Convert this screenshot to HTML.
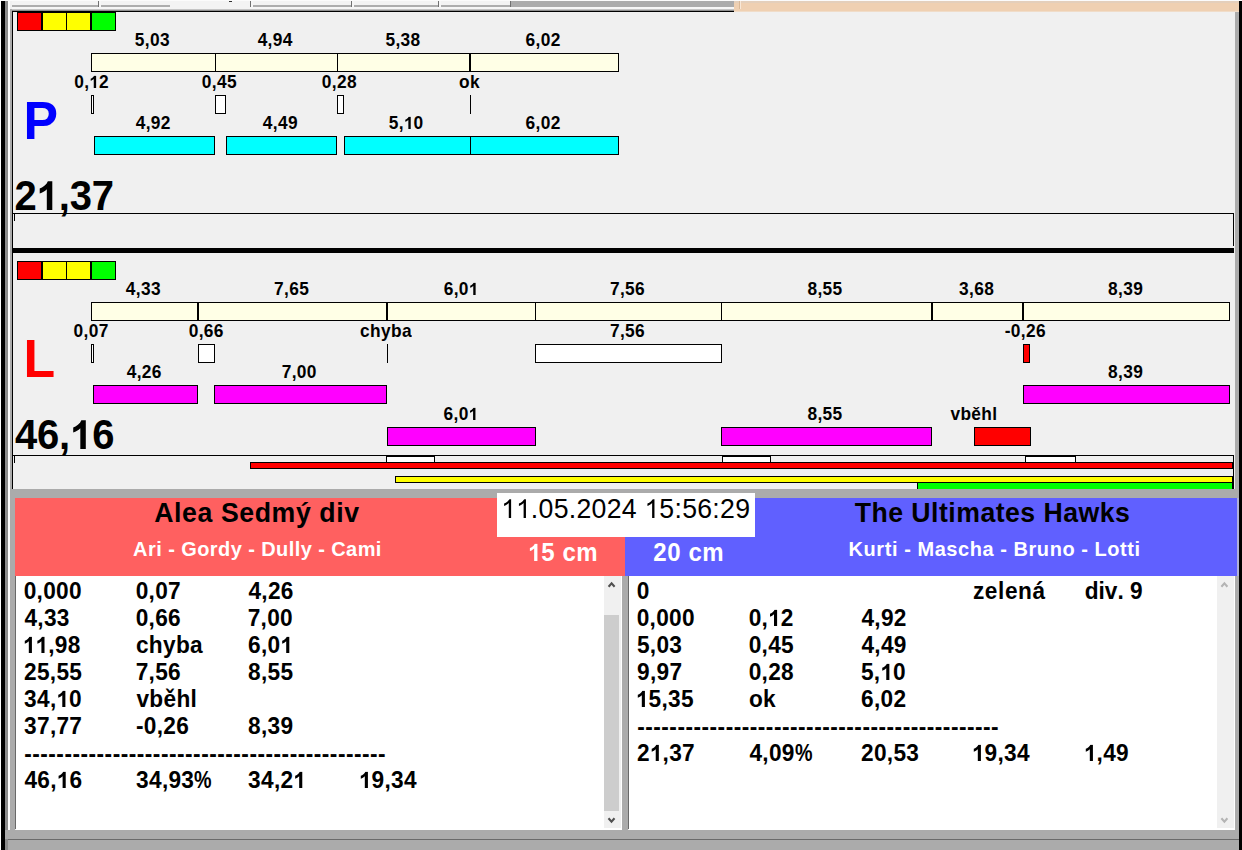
<!DOCTYPE html>
<html><head><meta charset="utf-8"><title>Flyball</title>
<style>
html,body{margin:0;padding:0;}
body{width:1242px;height:850px;overflow:hidden;background:#f0f0f0;position:relative;font-family:"Liberation Sans",sans-serif;}
.r{position:absolute;box-sizing:content-box;}
.t{position:absolute;white-space:nowrap;font-family:"Liberation Sans",sans-serif;font-weight:bold;font-kerning:none;color:#000;height:60px;line-height:60px;transform:scaleY(1.04);transform-origin:0 calc(50% + 0.3465em);}
.p{display:inline-block;transform:scaleX(.87);transform-origin:0 50%;margin-right:-2.6px}
.o,.n{display:inline-block;width:0.5562em;height:0.691em;background:currentColor}
.o{clip-path:polygon(70.7% 100%,46% 100%,46% 28.1%,38.9% 32.6%,31.3% 36.6%,23% 39.9%,14.1% 42.5%,14.1% 25.2%,24.2% 21.7%,35.1% 15.9%,44.7% 8.5%,50.7% 0%,70.7% 0%)}
.n{clip-path:polygon(67% 100%,51.2% 100%,51.2% 22.1%,44% 26.6%,36.2% 30.5%,27.5% 34.3%,19.6% 36.8%,19.6% 25%,31.5% 20.2%,42.8% 13.3%,51.5% 6.5%,56.8% 0%,67% 0%)}
</style></head><body>
<div class="r" style="left:0px;top:0px;width:1242px;height:1px;background:#fbfbfb"></div>
<div class="r" style="left:12px;top:1px;width:722px;height:4px;background:#f3f3f3"></div>
<div class="r" style="left:12px;top:5px;width:722px;height:2px;background:#adadad"></div>
<div class="r" style="left:12px;top:7px;width:722px;height:2px;background:#f6f6f6"></div>
<div class="r" style="left:170px;top:1px;width:80px;height:8px;background:#f3f3f3"></div>
<div class="r" style="left:229px;top:1px;width:3px;height:1px;background:#303030"></div>
<div class="r" style="left:98px;top:1px;width:1px;height:6px;background:#707070"></div>
<div class="r" style="left:99px;top:1px;width:2px;height:6px;background:#f6f6f6"></div>
<div class="r" style="left:250px;top:1px;width:1px;height:6px;background:#707070"></div>
<div class="r" style="left:251px;top:1px;width:2px;height:6px;background:#f6f6f6"></div>
<div class="r" style="left:351px;top:1px;width:1px;height:6px;background:#707070"></div>
<div class="r" style="left:352px;top:1px;width:2px;height:6px;background:#f6f6f6"></div>
<div class="r" style="left:438px;top:1px;width:1px;height:6px;background:#707070"></div>
<div class="r" style="left:439px;top:1px;width:2px;height:6px;background:#f6f6f6"></div>
<div class="r" style="left:510px;top:1px;width:225px;height:6px;background:#ababab"></div>
<div class="r" style="left:10px;top:9px;width:725px;height:1px;background:#c4c4c4"></div>
<div class="r" style="left:10px;top:10px;width:725px;height:1px;background:#8e8e8e"></div>
<div class="r" style="left:510px;top:1px;width:1px;height:6px;background:#707070"></div>
<div class="r" style="left:12px;top:11px;width:722px;height:1px;background:#000"></div>
<div class="r" style="left:734px;top:1px;width:505px;height:11px;background:#efd0b2"></div>
<div class="r" style="left:734px;top:1px;width:505px;height:2px;background:#e4cfbb"></div>
<div class="r" style="left:734px;top:11px;width:505px;height:1px;background:#f0dcc8"></div>
<div class="r" style="left:739px;top:1px;width:1px;height:8px;background:#d8b898"></div>
<div class="r" style="left:740px;top:1px;width:1px;height:8px;background:#f8e8d8"></div>
<div class="r" style="left:0px;top:0px;width:1px;height:850px;background:#fff"></div>
<div class="r" style="left:1px;top:1px;width:4px;height:849px;background:#000"></div>
<div class="r" style="left:5px;top:1px;width:3px;height:849px;background:#8c8c8c"></div>
<div class="r" style="left:8px;top:1px;width:2px;height:838px;background:#fff"></div>
<div class="r" style="left:10px;top:9px;width:2px;height:841px;background:#ababab"></div>
<div class="r" style="left:12px;top:11px;width:1px;height:478px;background:#000"></div>
<div class="r" style="left:1235px;top:12px;width:4px;height:838px;background:#ababab"></div>
<div class="r" style="left:1239px;top:1px;width:3px;height:849px;background:#000"></div>
<div class="r" style="left:17px;top:12px;width:23px;height:17px;background:#ff0000;border:1px solid #000"></div>
<div class="r" style="left:42px;top:12px;width:23px;height:17px;background:#ffff00;border:1px solid #000"></div>
<div class="r" style="left:66px;top:12px;width:23px;height:17px;background:#ffff00;border:1px solid #000"></div>
<div class="r" style="left:91px;top:12px;width:23px;height:17px;background:#00ff00;border:1px solid #000"></div>
<div class="t" style="left:134.74px;top:9.6px;font-size:17.33px;letter-spacing:0.36px">5,03</div>
<div class="t" style="left:257.63px;top:9.6px;font-size:17.33px;letter-spacing:0.36px">4,94</div>
<div class="t" style="left:385.4px;top:9.6px;font-size:17.33px;letter-spacing:0.36px">5,38</div>
<div class="t" style="left:525.61px;top:9.6px;font-size:17.33px;letter-spacing:0.36px">6,02</div>
<div class="r" style="left:91px;top:53px;width:526px;height:17px;background:#ffffe6;border:1px solid #000"></div>
<div class="r" style="left:215px;top:53px;width:1px;height:19px;background:#000"></div>
<div class="r" style="left:337px;top:53px;width:1px;height:19px;background:#000"></div>
<div class="r" style="left:469px;top:53px;width:2px;height:19px;background:#000"></div>
<div class="t" style="left:74.17px;top:51.8px;font-size:17.33px;letter-spacing:0.36px">0,<i class="o"></i>2</div>
<div class="t" style="left:201.81px;top:51.8px;font-size:17.33px;letter-spacing:0.36px">0,45</div>
<div class="t" style="left:321.74px;top:51.8px;font-size:17.33px;letter-spacing:0.36px">0,28</div>
<div class="t" style="left:459.02px;top:51.8px;font-size:17.33px;letter-spacing:0.36px">ok</div>
<div class="r" style="left:91px;top:95px;width:1px;height:17px;background:#fff;border:1px solid #000"></div>
<div class="r" style="left:215px;top:95px;width:9px;height:17px;background:#fff;border:1px solid #000"></div>
<div class="r" style="left:337px;top:95px;width:5px;height:17px;background:#fff;border:1px solid #000"></div>
<div class="r" style="left:470px;top:95px;width:1px;height:19px;background:#000"></div>
<div class="t" style="left:135.68px;top:92.8px;font-size:17.33px;letter-spacing:0.36px">4,92</div>
<div class="t" style="left:262.87px;top:92.8px;font-size:17.33px;letter-spacing:0.36px">4,49</div>
<div class="t" style="left:388.75px;top:92.8px;font-size:17.33px;letter-spacing:0.36px">5,<i class="o"></i>0</div>
<div class="t" style="left:525.61px;top:92.8px;font-size:17.33px;letter-spacing:0.36px">6,02</div>
<div class="r" style="left:94px;top:136px;width:119px;height:17px;background:#00ffff;border:1px solid #000"></div>
<div class="r" style="left:226px;top:136px;width:109px;height:17px;background:#00ffff;border:1px solid #000"></div>
<div class="r" style="left:344px;top:136px;width:125px;height:17px;background:#00ffff;border:1px solid #000"></div>
<div class="r" style="left:470px;top:136px;width:147px;height:17px;background:#00ffff;border:1px solid #000"></div>
<div class="t" style="left:23.42px;top:90.85px;font-size:51.8px;color:#0000ff;letter-spacing:-0.34px">P</div>
<div class="t" style="left:14.48px;top:165.6px;font-size:40px;letter-spacing:-0.15px">2<i class="o"></i>,37</div>
<div class="r" style="left:13px;top:213px;width:1221px;height:1px;background:#000"></div>
<div class="r" style="left:1233px;top:213px;width:1px;height:33px;background:#000"></div>
<div class="r" style="left:13px;top:248px;width:1221px;height:5px;background:#000"></div>
<div class="r" style="left:14px;top:214px;width:1px;height:7px;background:#000"></div>
<div class="r" style="left:17px;top:261px;width:23px;height:17px;background:#ff0000;border:1px solid #000"></div>
<div class="r" style="left:42px;top:261px;width:23px;height:17px;background:#ffff00;border:1px solid #000"></div>
<div class="r" style="left:66px;top:261px;width:23px;height:17px;background:#ffff00;border:1px solid #000"></div>
<div class="r" style="left:91px;top:261px;width:23px;height:17px;background:#00ff00;border:1px solid #000"></div>
<div class="t" style="left:125.77px;top:258.6px;font-size:17.33px;letter-spacing:0.36px">4,33</div>
<div class="t" style="left:274.09px;top:258.6px;font-size:17.33px;letter-spacing:0.36px">7,65</div>
<div class="t" style="left:443.67px;top:258.6px;font-size:17.33px;letter-spacing:0.36px">6,0<i class="o"></i></div>
<div class="t" style="left:609.96px;top:258.6px;font-size:17.33px;letter-spacing:0.36px">7,56</div>
<div class="t" style="left:807.46px;top:258.6px;font-size:17.33px;letter-spacing:0.36px">8,55</div>
<div class="t" style="left:958.99px;top:258.6px;font-size:17.33px;letter-spacing:0.36px">3,68</div>
<div class="t" style="left:1108.03px;top:258.6px;font-size:17.33px;letter-spacing:0.36px">8,39</div>
<div class="r" style="left:91px;top:302px;width:1137px;height:17px;background:#ffffe6;border:1px solid #000"></div>
<div class="r" style="left:197px;top:302px;width:2px;height:19px;background:#000"></div>
<div class="r" style="left:386px;top:302px;width:2px;height:19px;background:#000"></div>
<div class="r" style="left:535px;top:302px;width:1px;height:19px;background:#000"></div>
<div class="r" style="left:721px;top:302px;width:1px;height:19px;background:#000"></div>
<div class="r" style="left:931px;top:302px;width:2px;height:19px;background:#000"></div>
<div class="r" style="left:1022px;top:302px;width:2px;height:19px;background:#000"></div>
<div class="t" style="left:73.52px;top:300.8px;font-size:17.33px;letter-spacing:0.36px">0,07</div>
<div class="t" style="left:188.68px;top:300.8px;font-size:17.33px;letter-spacing:0.36px">0,66</div>
<div class="t" style="left:360px;top:300.8px;font-size:17.33px;letter-spacing:0.36px">chyba</div>
<div class="t" style="left:609.96px;top:300.8px;font-size:17.33px;letter-spacing:0.36px">7,56</div>
<div class="t" style="left:1004.69px;top:300.8px;font-size:17.33px;letter-spacing:0.36px">-0,26</div>
<div class="r" style="left:91px;top:344px;width:1px;height:17px;background:#fff;border:1px solid #000"></div>
<div class="r" style="left:198px;top:344px;width:15px;height:17px;background:#fff;border:1px solid #000"></div>
<div class="r" style="left:387px;top:344px;width:1px;height:19px;background:#000"></div>
<div class="r" style="left:535px;top:344px;width:185px;height:17px;background:#fff;border:1px solid #000"></div>
<div class="r" style="left:1023px;top:344px;width:5px;height:17px;background:#ff0000;border:1px solid #000"></div>
<div class="t" style="left:126.67px;top:341.8px;font-size:17.33px;letter-spacing:0.36px">4,26</div>
<div class="t" style="left:281.68px;top:341.8px;font-size:17.33px;letter-spacing:0.36px">7,00</div>
<div class="t" style="left:1108.03px;top:341.8px;font-size:17.33px;letter-spacing:0.36px">8,39</div>
<div class="r" style="left:93px;top:385px;width:103px;height:17px;background:#ff00ff;border:1px solid #000"></div>
<div class="r" style="left:214px;top:385px;width:171px;height:17px;background:#ff00ff;border:1px solid #000"></div>
<div class="r" style="left:1023px;top:385px;width:205px;height:17px;background:#ff00ff;border:1px solid #000"></div>
<div class="t" style="left:443.47px;top:383.7px;font-size:17.33px;letter-spacing:0.36px">6,0<i class="o"></i></div>
<div class="t" style="left:807.46px;top:383.7px;font-size:17.33px;letter-spacing:0.36px">8,55</div>
<div class="t" style="left:950.41px;top:383.7px;font-size:17.33px;letter-spacing:0.36px">vb&#283;hl</div>
<div class="r" style="left:387px;top:427px;width:147px;height:17px;background:#ff00ff;border:1px solid #000"></div>
<div class="r" style="left:721px;top:427px;width:209px;height:17px;background:#ff00ff;border:1px solid #000"></div>
<div class="r" style="left:974px;top:427px;width:55px;height:17px;background:#ff0000;border:1px solid #000"></div>
<div class="t" style="left:23.42px;top:328.65px;font-size:51.8px;color:#ff0000;letter-spacing:-0.22px">L</div>
<div class="t" style="left:14.97px;top:404.5px;font-size:40px;letter-spacing:-0.17px">46,<i class="o"></i>6</div>
<div class="r" style="left:13px;top:455px;width:1221px;height:1px;background:#000"></div>
<div class="r" style="left:1233px;top:455px;width:1px;height:34px;background:#000"></div>
<div class="r" style="left:14px;top:456px;width:1px;height:7px;background:#000"></div>
<div class="r" style="left:386px;top:456px;width:47px;height:5px;background:#fff;border:1px solid #000"></div>
<div class="r" style="left:722px;top:456px;width:47px;height:5px;background:#fff;border:1px solid #000"></div>
<div class="r" style="left:1025px;top:456px;width:49px;height:5px;background:#fff;border:1px solid #000"></div>
<div class="r" style="left:250px;top:462px;width:981px;height:5px;background:#ff0000;border:1px solid #000"></div>
<div class="r" style="left:395px;top:476px;width:836px;height:5px;background:#ffff00;border:1px solid #000"></div>
<div class="r" style="left:917px;top:482px;width:314px;height:6px;background:#00ff00;border:1px solid #000"></div>
<div class="r" style="left:10px;top:489px;width:1229px;height:9px;background:#ababab"></div>
<div class="r" style="left:10px;top:498px;width:5px;height:341px;background:#ababab"></div>
<div class="r" style="left:15px;top:498px;width:610px;height:78px;background:#ff6060"></div>
<div class="r" style="left:625px;top:498px;width:612px;height:78px;background:#6060ff"></div>
<div class="r" style="left:1237px;top:498px;width:2px;height:78px;background:#b0b0d8"></div>
<div class="r" style="left:497px;top:493px;width:258px;height:44px;background:#fff"></div>
<div class="t" style="left:501.2px;top:479.1px;font-size:26.67px;font-weight:normal;letter-spacing:0.28px"><i class="n"></i><i class="n"></i>.05.2024 <i class="n"></i>5:56:29</div>
<div class="t" style="left:154.21px;top:483.4px;font-size:26.67px;letter-spacing:0.6px">Alea Sedm&yacute; div</div>
<div class="t" style="left:133.12px;top:519px;font-size:20px;color:#fff;letter-spacing:0.42px">Ari - Gordy - Dully - Cami</div>
<div class="t" style="left:528px;top:523.3px;font-size:24px;color:#fff;letter-spacing:0.53px"><i class="o"></i>5 cm</div>
<div class="t" style="left:653.21px;top:523.3px;font-size:24px;color:#fff;letter-spacing:0.61px">20 cm</div>
<div class="t" style="left:854.64px;top:483.4px;font-size:26.67px;letter-spacing:0.48px">The Ultimates Hawks</div>
<div class="t" style="left:848.61px;top:519px;font-size:20px;color:#fff;letter-spacing:0.55px">Kurti - Mascha - Bruno - Lotti</div>
<div class="r" style="left:15px;top:576px;width:1px;height:253px;background:#696969"></div>
<div class="r" style="left:16px;top:576px;width:606px;height:254px;background:#fff"></div>
<div class="r" style="left:604px;top:576px;width:17px;height:252px;background:#f0f0f0"></div>
<div class="r" style="left:604px;top:615px;width:15px;height:196px;background:#cdcdcd"></div>
<div class="r" style="left:622px;top:576px;width:6px;height:254px;background:#ababab"></div>
<div class="r" style="left:628px;top:576px;width:1px;height:253px;background:#696969"></div>
<div class="r" style="left:629px;top:576px;width:606px;height:254px;background:#fff"></div>
<div class="r" style="left:1217px;top:576px;width:17px;height:252px;background:#f0f0f0"></div>
<div class="r" style="left:5px;top:830px;width:1234px;height:9px;background:#ababab"></div>
<div class="r" style="left:8px;top:839px;width:1231px;height:1px;background:#6a6a6a"></div>
<div class="r" style="left:8px;top:840px;width:1231px;height:10px;background:#ababab"></div>
<div class="t" style="left:23.71px;top:560.8px;font-size:22.67px;letter-spacing:0.3px">0,000</div>
<div class="t" style="left:135.71px;top:560.8px;font-size:22.67px;letter-spacing:0.3px">0,07</div>
<div class="t" style="left:248.41px;top:560.8px;font-size:22.67px;letter-spacing:0.3px">4,26</div>
<div class="t" style="left:24.41px;top:587.8px;font-size:22.67px;letter-spacing:0.3px">4,33</div>
<div class="t" style="left:135.71px;top:587.8px;font-size:22.67px;letter-spacing:0.3px">0,66</div>
<div class="t" style="left:247.68px;top:587.8px;font-size:22.67px;letter-spacing:0.3px">7,00</div>
<div class="t" style="left:23.02px;top:614.8px;font-size:22.67px;letter-spacing:0.3px"><i class="o"></i><i class="o"></i>,98</div>
<div class="t" style="left:135.97px;top:614.8px;font-size:22.67px;letter-spacing:0.3px">chyba</div>
<div class="t" style="left:248px;top:614.8px;font-size:22.67px;letter-spacing:0.3px">6,0<i class="o"></i></div>
<div class="t" style="left:24.04px;top:641.8px;font-size:22.67px;letter-spacing:0.3px">25,55</div>
<div class="t" style="left:135.68px;top:641.8px;font-size:22.67px;letter-spacing:0.3px">7,56</div>
<div class="t" style="left:248.05px;top:641.8px;font-size:22.67px;letter-spacing:0.3px">8,55</div>
<div class="t" style="left:24.09px;top:668.8px;font-size:22.67px;letter-spacing:0.3px">34,<i class="o"></i>0</div>
<div class="t" style="left:136.48px;top:668.8px;font-size:22.67px;letter-spacing:0.3px">vb&#283;hl</div>
<div class="t" style="left:24.09px;top:695.8px;font-size:22.67px;letter-spacing:0.3px">37,77</div>
<div class="t" style="left:135.97px;top:695.8px;font-size:22.67px;letter-spacing:0.3px">-0,26</div>
<div class="t" style="left:248.05px;top:695.8px;font-size:22.67px;letter-spacing:0.3px">8,39</div>
<div class="t" style="left:24.17px;top:723.8px;font-size:22.67px;letter-spacing:0.5px">---------------------------------------------</div>
<div class="t" style="left:24.41px;top:749.8px;font-size:22.67px;letter-spacing:0.3px">46,<i class="o"></i>6</div>
<div class="t" style="left:136.09px;top:749.8px;font-size:22.67px;letter-spacing:0.3px">34,93<span class="p">%</span></div>
<div class="t" style="left:248.09px;top:749.8px;font-size:22.67px;letter-spacing:0.3px">34,2<i class="o"></i></div>
<div class="t" style="left:359.02px;top:749.8px;font-size:22.67px;letter-spacing:0.3px"><i class="o"></i>9,34</div>
<div class="t" style="left:636.71px;top:560.8px;font-size:22.67px;letter-spacing:0.3px">0</div>
<div class="t" style="left:972.97px;top:560.8px;font-size:22.67px;letter-spacing:0.57px">zelen&aacute;</div>
<div class="t" style="left:1084.71px;top:560.8px;font-size:22.67px;letter-spacing:0.01px">div. 9</div>
<div class="t" style="left:636.71px;top:587.8px;font-size:22.67px;letter-spacing:0.3px">0,000</div>
<div class="t" style="left:748.71px;top:587.8px;font-size:22.67px;letter-spacing:0.3px">0,<i class="o"></i>2</div>
<div class="t" style="left:861.41px;top:587.8px;font-size:22.67px;letter-spacing:0.3px">4,92</div>
<div class="t" style="left:636.97px;top:614.8px;font-size:22.67px;letter-spacing:0.3px">5,03</div>
<div class="t" style="left:748.71px;top:614.8px;font-size:22.67px;letter-spacing:0.3px">0,45</div>
<div class="t" style="left:861.41px;top:614.8px;font-size:22.67px;letter-spacing:0.3px">4,49</div>
<div class="t" style="left:637.03px;top:641.8px;font-size:22.67px;letter-spacing:0.3px">9,97</div>
<div class="t" style="left:748.71px;top:641.8px;font-size:22.67px;letter-spacing:0.3px">0,28</div>
<div class="t" style="left:860.97px;top:641.8px;font-size:22.67px;letter-spacing:0.3px">5,<i class="o"></i>0</div>
<div class="t" style="left:636.02px;top:668.8px;font-size:22.67px;letter-spacing:0.3px"><i class="o"></i>5,35</div>
<div class="t" style="left:748.97px;top:668.8px;font-size:22.67px;letter-spacing:0.3px">ok</div>
<div class="t" style="left:861px;top:668.8px;font-size:22.67px;letter-spacing:0.3px">6,02</div>
<div class="t" style="left:637.17px;top:696.8px;font-size:22.67px;letter-spacing:0.5px">---------------------------------------------</div>
<div class="t" style="left:637.04px;top:722.8px;font-size:22.67px;letter-spacing:0.3px">2<i class="o"></i>,37</div>
<div class="t" style="left:749.41px;top:722.8px;font-size:22.67px;letter-spacing:0.3px">4,09<span class="p">%</span></div>
<div class="t" style="left:861.04px;top:722.8px;font-size:22.67px;letter-spacing:0.3px">20,53</div>
<div class="t" style="left:972.02px;top:722.8px;font-size:22.67px;letter-spacing:0.3px"><i class="o"></i>9,34</div>
<div class="t" style="left:1084.02px;top:722.8px;font-size:22.67px;letter-spacing:0.3px"><i class="o"></i>,49</div>
<svg class="r" style="left:0;top:0" width="1242" height="850"><path d="M608.6,586.8000000000001 L611.6,583.4 L614.6,586.8000000000001" stroke="#505050" stroke-width="2.1" fill="none"/></svg>
<svg class="r" style="left:0;top:0" width="1242" height="850"><path d="M608.5,818.3 L611.5,821.7 L614.5,818.3" stroke="#505050" stroke-width="2.1" fill="none"/></svg>
<svg class="r" style="left:0;top:0" width="1242" height="850"><path d="M1221.4,586.8000000000001 L1224.4,583.4 L1227.4,586.8000000000001" stroke="#b4b4b4" stroke-width="2.1" fill="none"/></svg>
<svg class="r" style="left:0;top:0" width="1242" height="850"><path d="M1221.4,818.3 L1224.4,821.7 L1227.4,818.3" stroke="#b4b4b4" stroke-width="2.1" fill="none"/></svg>
</body></html>
